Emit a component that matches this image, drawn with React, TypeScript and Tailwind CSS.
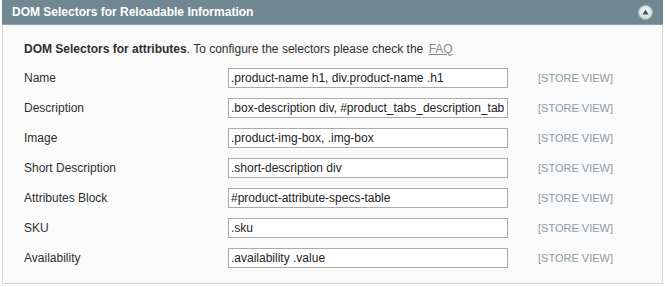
const rows = [
  { label: 'Name', value: '.product-name h1, div.product-name .h1' },
  { label: 'Description', value: '.box-description div, #product_tabs_description_tab' },
  { label: 'Image', value: '.product-img-box, .img-box' },
  { label: 'Short Description', value: '.short-description div' },
  { label: 'Attributes Block', value: '#product-attribute-specs-table' },
  { label: 'SKU', value: '.sku' },
  { label: 'Availability', value: '.availability .value' },
]

function CollapseIcon() {
  return (
    <svg width="15" height="15" viewBox="0 0 15 15">
      <defs>
        <radialGradient id="g" cx="50%" cy="40%" r="60%">
          <stop offset="0%" stopColor="#ffffff" />
          <stop offset="100%" stopColor="#c9d2d5" />
        </radialGradient>
      </defs>
      <circle cx="7.5" cy="7.5" r="7" fill="url(#g)" stroke="#a9b8bd" strokeWidth="1" />
      <path d="M7.5 4.5 L10.5 9.5 L4.5 9.5 Z" fill="#2f5662" />
    </svg>
  )
}

export default function App() {
  return (
    <div className="bg-white w-[665px] h-[287px] pl-[2px] font-['Liberation_Sans',Arial,sans-serif] text-[12px] text-[#2f2f2f]">
      <div className="w-[661px]">
        <div className="h-[25px] bg-[#6f8891] flex items-center justify-between pl-[10px] pr-[10px] border-b border-[#8fa3aa]">
          <span className="text-white font-bold text-[12px]">DOM Selectors for Reloadable Information</span>
          <CollapseIcon />
        </div>
        <div className="bg-[#fafafa] border-x border-b border-[#d6d6d6] pl-[21px] pt-[15px] pb-[10px]">
          <div className="h-[17px] flex items-center">
            <span>
              <b>DOM Selectors for attributes</b>. To configure the selectors please check the{' '}
              <a className="text-[#8a8a8a] underline ml-[2px]">FAQ</a>
            </span>
          </div>
          <div className="mt-[6px]">
            {rows.map((r) => (
              <div key={r.label} className="h-[30px] flex items-center">
                <div className="w-[204px]">{r.label}</div>
                <div className="w-[280px] h-[20px] border border-[#aaaaaa] bg-white flex items-center px-[2px] overflow-hidden whitespace-nowrap text-[#222]">
                  {r.value}
                </div>
                <div className="ml-[30px] text-[11px] text-[#8d9ba5]">[STORE VIEW]</div>
              </div>
            ))}
          </div>
        </div>
      </div>
    </div>
  )
}
